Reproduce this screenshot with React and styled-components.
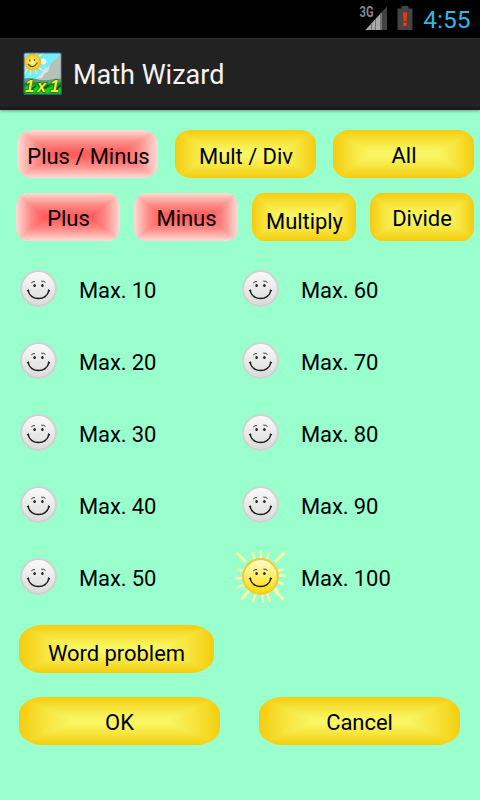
import React, { useState } from 'react';
import styled, { createGlobalStyle, css } from 'styled-components';

const GlobalStyle = createGlobalStyle`
  * {
    box-sizing: border-box;
  }
  body {
    margin: 0;
    background: #99ffcc;
    font-family: Roboto, 'Noto Sans', sans-serif;
  }
`;

const Screen = styled.div`
  width: 480px;
  height: 800px;
  overflow: hidden;
  background: #99ffcc;
`;
const StatusBar = styled.div`
  display: flex;
  justify-content: flex-end;
  align-items: center;
  height: 38px;
  padding-right: 9.5px;
  background: #000;
`;
const Clock = styled.span`
  margin-left: 10px;
  color: #33b5e5;
  font-size: 24.5px;
  line-height: 38px;
  padding-top: 2px;
`;
const BatterySvg = styled.svg`
  margin: 0 0 2px 9px;
`;
const SignalSvg = styled.svg`
  margin-bottom: 2px;
`;
const ActionBar = styled.header`
  display: flex;
  align-items: center;
  height: 72px;
  padding: 0 0 0 23px;
  background: #222;
  border-top: 1px solid #2b2b2b;
  border-bottom: 3px solid #1b1b1b;
  box-shadow: 0 1px 3px rgba(0, 0, 0, 0.35);
`;
const Title = styled.h1`
  margin: 4px 0 0 11px;
  color: #f3f3f3;
  font-size: 27px;
  font-weight: 400;
  line-height: 32px;
`;
const Content = styled.main`
  padding-top: 20px;
`;
const ButtonRow = styled.div`
  display: flex;
  gap: ${(props) => props.$gap}px;
  padding-left: ${(props) => props.$left}px;
  margin-bottom: ${(props) => props.$bottom || 0}px;
`;

// the darker (or lighter) of the two gradients wins, which gives the bevelled corners
const yellow = css`
  background-color: #fff;
  background-image: linear-gradient(to right, #f5cc0e, #f7e640 14%, #f8f763 26%, #f8f763 74%, #f7e640 86%, #f5cc0e),
    linear-gradient(to bottom, #f5cc0e, #f7e640 25%, #f8f763 46%, #f8f763 54%, #f7e640 75%, #f5cc0e);
  background-blend-mode: darken;
`;
const red = css`
  background-color: #000;
  background-image: linear-gradient(to right, #ffdcd4, #ff8a86 14%, #ff5e5e 26%, #ff5e5e 74%, #ff8a86 86%, #ffdcd4),
    linear-gradient(to bottom, #ffdcd4, #ff8a86 25%, #ff5e5e 46%, #ff5e5e 54%, #ff8a86 75%, #ffdcd4);
  background-blend-mode: lighten;
`;
const PillButton = styled.button`
  width: ${(props) => props.$width}px;
  height: 48px;
  padding: ${(props) => props.$drop || 0}px 0 0 ${(props) => props.$nudge || 0}px;
  border: 0;
  border-radius: ${(props) => props.$radius};
  color: #000;
  font-family: inherit;
  font-size: 22px;
  letter-spacing: -0.05px;
  line-height: 26px;
  white-space: nowrap;
  ${(props) => (props.$active ? red : yellow)}
`;
const OptionGrid = styled.div`
  display: grid;
  grid-template-columns: 222px 222px;
  grid-auto-flow: column;
  grid-template-rows: repeat(5, 72px);
  padding-left: 12px;
  margin: 13px 0 11px;
`;
const Option = styled.label`
  display: flex;
  align-items: center;
  color: #000;
  font-size: 22px;
  letter-spacing: -0.1px;
  line-height: 26px;
`;
const OptionText = styled.span`
  margin: 2px 0 0 13px;
`;
const FaceSvg = styled.svg`
  margin-bottom: 1px;
`;

const RAYS = [
  [-8, -24], [0.5, -26], [8.5, -23.5], [24, -24], [23.5, -7.5], [25.5, -1],
  [23, 7.5], [18, 15], [23, 23], [9.5, 25], [2.5, 26.5], [-7.5, 25.5],
  [-19, 23], [-23.5, 11.5], [-25.5, 2], [-23.5, -7.5], [-24, -24],
];

function Signal() {
  return (
    <SignalSvg width="29" height="26" viewBox="0 0 29 26">
      <text x="0.500" y="12" fill="#8a8a8a" fontSize="14" fontWeight="700" textLength="14" lengthAdjust="spacingAndGlyphs">
        3G
      </text>
      <path d="M6.500 25 L28 1.500 V25Z" fill="#424242" />
      <path d="M6.500 25 L22.500 7.500 V25Z" fill="#a8a8a8" />
      <path d="M12.500 18.500 V25 M16.500 14 V25 M21.500 9 V25" stroke="#707070" strokeWidth="1" />
    </SignalSvg>
  );
}

function Battery() {
  return (
    <BatterySvg width="16" height="24" viewBox="0 0 16 24">
      <path d="M4.500 0h7v2.500H15.500V24H0.500V2.500H4.500Z" fill="#444" />
      <path d="M6 6.500h4l-.6 8.500H6.600Z M6.200 16.500h3.600v3.500H6.200Z" fill="#ff3300" />
    </BatterySvg>
  );
}

function Logo() {
  return (
    <svg width="39" height="43" viewBox="0 0 39 43">
      <defs>
        <clipPath id="logo-clip">
          <rect x="0.800" y="0.800" width="37.700" height="41.700" rx="1.500" />
        </clipPath>
        <radialGradient id="logo-sun">
          <stop offset="0.200" stopColor="#fff37a" />
          <stop offset="1" stopColor="#f3b90f" />
        </radialGradient>
      </defs>
      <g clipPath="url(#logo-clip)">
        <rect width="39" height="43" fill="#74eefc" />
        <path d="M13 27 L19 21 L22 15 L24 16 L27 13 L31 8 L34 7 L38 0 V32 H13Z" fill="#b3c4b6" />
        <path d="M13 27 L19 21 L22 15 L24 16 L27 13 L25 20 L22 21 L19 26Z" fill="#d9e3ee" />
        <path d="M0 27 Q7 25 13 27 T26 28 Q33 26 39 27 V33 H0Z" fill="#5f9a76" />
        <path d="M0 31 Q10 29 20 31 T39 30 V43 H0Z" fill="#0b9c22" />
        <path d="M0 36 Q8 31 15 35 T30 34 L39 36 V43 H0Z" fill="#12cf1e" />
        <path d="M4 40 L13 34 M18 39 L26 33 M30 40 L38 33" stroke="#075c16" strokeWidth="2" />
        <g stroke="#f5f29a" strokeWidth="1.200">
          <path d="M9.500 10 L1 22 M9.500 10 L7 23 M9.500 10 L14 22 M9.500 10 L20 19 M9.500 10 L20 1 M9.500 10 L0 17 M9.500 10 L14 0" />
        </g>
        <circle cx="20.500" cy="9.500" r="3" fill="#eef6fa" />
        <circle cx="9.500" cy="10" r="8.600" fill="url(#logo-sun)" />
        <path d="M5 12 Q10 18 14.500 10.500" fill="none" stroke="#6a5206" strokeWidth="1.200" />
        <path d="M6.800 7.500v2 M11.500 7v2" stroke="#6a5206" strokeWidth="1.300" />
      </g>
      <rect x="0.900" y="0.900" width="37.400" height="41.400" rx="1.500" fill="none" stroke="#20408c" strokeWidth="0.900" />
      <g fontFamily="Liberation Sans" fontSize="16.500" fontWeight="700" fontStyle="italic" fill="#f4ee3c" stroke="#274b08" strokeWidth="1" paintOrder="stroke">
        <text x="2" y="40">1</text>
        <text x="14" y="40">x</text>
        <text x="27" y="40">1</text>
      </g>
    </svg>
  );
}

function Face({ sunny }) {
  return (
    <FaceSvg width="54" height="56" viewBox="-26.5 -26.5 54 56">
      <defs>
        <linearGradient id="face-off" x1="0" y1="0" x2="0" y2="1">
          <stop offset="0" stopColor="#fafafa" />
          <stop offset="1" stopColor="#dadada" />
        </linearGradient>
        <linearGradient id="face-on" x1="0" y1="0" x2="0" y2="1">
          <stop offset="0" stopColor="#fffbd0" />
          <stop offset="0.500" stopColor="#ffee66" />
          <stop offset="1" stopColor="#ffd800" />
        </linearGradient>
      </defs>
      {sunny &&
        RAYS.map(([x, y]) => (
          <line key={`${x},${y}`} x1={x * 0.6} y1={y * 0.6} x2={x} y2={y} stroke="#f3fba6" strokeWidth={Math.hypot(x, y) > 29 ? 3 : 2.4} />
        ))}
      <circle r="17.400" fill={sunny ? 'url(#face-on)' : 'url(#face-off)'} stroke={sunny ? '#f5c63a' : '#cfd3d0'} strokeWidth="2" />
      <ellipse cx="-3.900" cy="-3" rx="1.300" ry="1.600" fill="#222" />
      <ellipse cx="3.900" cy="-3" rx="1.300" ry="1.600" fill="#222" />
      <path d="M-7.200 -5.600 Q-5.500 -7.300 -3.600 -6.900 M2.800 -7.300 Q5.500 -7.800 7 -5.900" fill="none" stroke="#333" strokeWidth="1" />
      <path d="M-10.300 2 C-8.500 12.800 8.500 12.800 10.300 2" fill="none" stroke="#1a1a1a" strokeWidth="1.500" />
      <path d="M-11.400 2.400 L-9.400 1.400 M11.400 2.400 L9.400 1.400" stroke="#1a1a1a" strokeWidth="1.200" />
    </FaceSvg>
  );
}

const LIMITS = [10, 20, 30, 40, 50, 60, 70, 80, 90, 100];

function App() {
  const [limit, setLimit] = useState(100);

  return (
    <React.Fragment>
      <GlobalStyle />
      <Screen>
        <StatusBar>
          <Signal />
          <Battery />
          <Clock>4:55</Clock>
        </StatusBar>
        <ActionBar>
          <Logo />
          <Title>Math Wizard</Title>
        </ActionBar>
        <Content>
          <ButtonRow $gap={17} $left={17} $bottom={15}>
            <PillButton $width={141} $radius="16px / 14px" $drop={6} $nudge={2} $active>Plus / Minus</PillButton>
            <PillButton $width={141} $radius="16px / 14px" $drop={6} $nudge={1}>Mult / Div</PillButton>
            <PillButton $width={141} $radius="16px / 14px" $drop={4} $nudge={1}>All</PillButton>
          </ButtonRow>
          <ButtonRow $gap={14} $left={16}>
            <PillButton $width={104} $radius="12px / 14px" $drop={4} $nudge={1} $active>Plus</PillButton>
            <PillButton $width={104} $radius="12px / 14px" $drop={4} $nudge={1} $active>Minus</PillButton>
            <PillButton $width={104} $radius="12px / 14px" $drop={10} $nudge={1}>Multiply</PillButton>
            <PillButton $width={104} $radius="12px / 14px" $drop={4}>Divide</PillButton>
          </ButtonRow>
          <OptionGrid>
            {LIMITS.map((value) => (
              <Option key={value} onClick={() => setLimit(value)}>
                <Face sunny={value === limit} />
                <OptionText>Max. {value}</OptionText>
              </Option>
            ))}
          </OptionGrid>
          <ButtonRow $left={19} $bottom={24}>
            <PillButton $width={195} $radius="24px / 17px" $drop={10}>Word problem</PillButton>
          </ButtonRow>
          <ButtonRow $gap={39} $left={19}>
            <PillButton $width={201} $radius="24px / 17px" $drop={4}>OK</PillButton>
            <PillButton $width={201} $radius="24px / 17px" $drop={4}>Cancel</PillButton>
          </ButtonRow>
        </Content>
      </Screen>
    </React.Fragment>
  );
}

export default App;
